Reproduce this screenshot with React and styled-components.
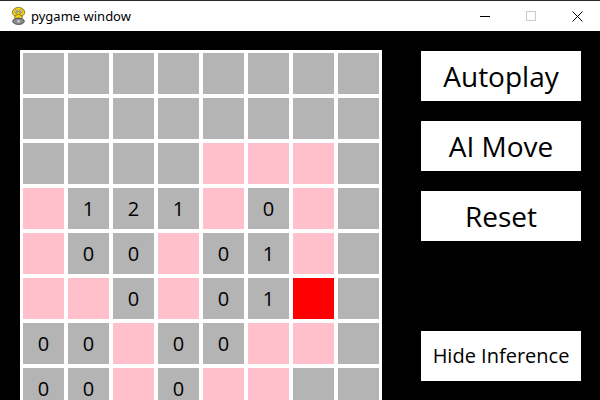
import styled, { createGlobalStyle } from "styled-components";

const GlobalStyle = createGlobalStyle`
  html, body {
    margin: 0;
    padding: 0;
    background: #000;
  }
`

// g = gray, p = pink (flagged safe), r = red (mine), digits = revealed count
const board = [
    ["g", "g", "g", "g", "g", "g", "g", "g"],
    ["g", "g", "g", "g", "g", "g", "g", "g"],
    ["g", "g", "g", "g", "p", "p", "p", "g"],
    ["p", "1", "2", "1", "p", "0", "p", "g"],
    ["p", "0", "0", "p", "0", "1", "p", "g"],
    ["p", "p", "0", "p", "0", "1", "r", "g"],
    ["0", "0", "p", "0", "0", "p", "p", "g"],
    ["0", "0", "p", "0", "p", "p", "g", "g"],
]

const cellColor = (v) => {
    if (v === "p") return "#ffc0cb";
    if (v === "r") return "#ff0000";
    return "#b4b4b4";
}

const PygameIcon = () => (
    <svg width="15" height="18" viewBox="0 0 14 17">
        <ellipse cx="7" cy="5" rx="5.8" ry="4.6" fill="#f2d21c" stroke="#7a6a10" strokeWidth="0.8" />
        <circle cx="5" cy="4.3" r="1.4" fill="#fff" stroke="#333" strokeWidth="0.5" />
        <circle cx="9" cy="4.3" r="1.4" fill="#fff" stroke="#333" strokeWidth="0.5" />
        <circle cx="5.2" cy="4.5" r="0.5" fill="#222" />
        <circle cx="8.8" cy="4.5" r="0.5" fill="#222" />
        <ellipse cx="7" cy="10" rx="3.6" ry="3" fill="#f2d21c" stroke="#7a6a10" strokeWidth="0.8" />
        <ellipse cx="7" cy="13.5" rx="5.5" ry="3" fill="#8a8a8a" stroke="#444" strokeWidth="0.8" />
        <circle cx="7" cy="13.5" r="1.3" fill="#ccc" />
    </svg>
)

const App = () => {
    return (
        <>
            <GlobalStyle />
            <Window>
                <TitleBar>
                    <TitleLeft>
                        <PygameIcon />
                        <Title>pygame window</Title>
                    </TitleLeft>
                    <Controls>
                        <Control>
                            <svg width="10" height="10" viewBox="0 0 10 10">
                                <line x1="0" y1="5.5" x2="10" y2="5.5" stroke="#000" strokeWidth="1" />
                            </svg>
                        </Control>
                        <Control>
                            <svg width="10" height="10" viewBox="0 0 10 10">
                                <rect x="0.5" y="0.5" width="9" height="9" fill="none" stroke="#cccccc" strokeWidth="1" />
                            </svg>
                        </Control>
                        <Control>
                            <svg width="11" height="11" viewBox="0 0 11 11">
                                <line x1="0.5" y1="0.5" x2="10.5" y2="10.5" stroke="#000" strokeWidth="1" />
                                <line x1="10.5" y1="0.5" x2="0.5" y2="10.5" stroke="#000" strokeWidth="1" />
                            </svg>
                        </Control>
                    </Controls>
                </TitleBar>
                <Screen>
                    <Board>
                        {board.flat().map((v, i) => (
                            <Cell key={i} $bg={cellColor(v)}>
                                {/[0-9]/.test(v) ? v : ""}
                            </Cell>
                        ))}
                    </Board>
                    <Side>
                        <Button>Autoplay</Button>
                        <Button $top={20}>AI Move</Button>
                        <Button $top={20}>Reset</Button>
                        <Button $top={90} $small>Hide Inference</Button>
                    </Side>
                </Screen>
            </Window>
        </>
    );
};

const Window = styled.div`
    width: 600px;
    height: 400px;
    overflow: hidden;
    display: flex;
    flex-direction: column;
    background: #000;
    font-family: "Open Sans", "Noto Sans", sans-serif;
`

const TitleBar = styled.div`
    height: 30px;
    flex-shrink: 0;
    background: #fff;
    border-top: 1px solid #2b2b2b;
    display: flex;
    align-items: center;
    justify-content: space-between;
`

const TitleLeft = styled.div`
    display: flex;
    align-items: center;
    gap: 5px;
    padding-left: 11px;
`

const Title = styled.span`
    font-family: "Noto Sans", "Open Sans", sans-serif;
    font-size: 13px;
    color: #000;
    margin-top: -1px;
`

const Controls = styled.div`
    display: flex;
    height: 100%;
`

const Control = styled.div`
    width: 46px;
    display: flex;
    align-items: center;
    justify-content: center;
`

const Screen = styled.div`
    flex: 1;
    display: flex;
    align-items: flex-start;
    padding: 19px 0 0 20px;
    overflow: hidden;
`

const Board = styled.div`
    display: grid;
    grid-template-columns: repeat(8, 41px);
    grid-auto-rows: 41px;
    gap: 4px;
    padding: 3px;
    background: #fff;
    flex-shrink: 0;
`

const Cell = styled.div`
    background: ${(p) => p.$bg};
    display: flex;
    align-items: center;
    justify-content: center;
    font-size: 20px;
    color: #000;
    line-height: 1;
`

const Side = styled.div`
    display: flex;
    flex-direction: column;
    margin-left: 39px;
    padding-top: 1px;
`

const Button = styled.div`
    width: 160px;
    height: 50px;
    margin-top: ${(p) => p.$top || 0}px;
    background: #fff;
    color: #000;
    display: flex;
    align-items: center;
    justify-content: center;
    font-size: ${(p) => (p.$small ? 20 : 28)}px;
    line-height: 1;
`

export default App;
